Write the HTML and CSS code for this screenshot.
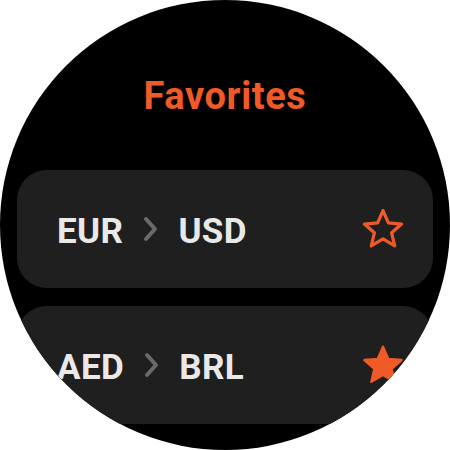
FILE: index.html
```html
<!DOCTYPE html>
<html>
<head>
<meta charset="utf-8">
<link rel="stylesheet" href="styles.css">
</head>
<body>
<div class="watch">
  <h1 class="title">Favorites</h1>
  <div class="list">
    <div class="card">
      <div class="pair">
        <span class="code">EUR</span>
        <svg class="chev" viewBox="0 0 16 26" width="16" height="26"><path d="M3 3 L12 13 L3 23" fill="none" stroke="#6a6a6a" stroke-width="4" stroke-linecap="round" stroke-linejoin="round"/></svg>
        <span class="code">USD</span>
      </div>
      <svg class="star" viewBox="0 0 24 24" width="46" height="46"><path d="M12 2.4 L14.8 8.8 L21.7 9.4 L16.5 14 L18.1 20.8 L12 17.2 L5.9 20.8 L7.5 14 L2.3 9.4 L9.2 8.8 Z" fill="none" stroke="#f05a28" stroke-width="1.7" stroke-linejoin="round"/></svg>
    </div>
    <div class="card">
      <div class="pair">
        <span class="code">AED</span>
        <svg class="chev" viewBox="0 0 16 26" width="16" height="26"><path d="M3 3 L12 13 L3 23" fill="none" stroke="#6a6a6a" stroke-width="4" stroke-linecap="round" stroke-linejoin="round"/></svg>
        <span class="code">BRL</span>
      </div>
      <svg class="star" viewBox="0 0 24 24" width="46" height="46"><path d="M12 2.4 L14.8 8.8 L21.7 9.4 L16.5 14 L18.1 20.8 L12 17.2 L5.9 20.8 L7.5 14 L2.3 9.4 L9.2 8.8 Z" fill="#f05a28" stroke="#f05a28" stroke-width="1.2" stroke-linejoin="round"/></svg>
    </div>
  </div>
</div>
</body>
</html>
```

FILE: styles.css
```css
html, body {
  margin: 0;
  padding: 0;
  background: #ffffff;
}
.watch {
  width: 450px;
  height: 450px;
  border-radius: 50%;
  background: #000000;
  overflow: hidden;
  font-family: Roboto, "Liberation Sans", sans-serif;
  display: flex;
  flex-direction: column;
  align-items: center;
}
.title {
  margin: 74px 0 0 0;
  height: 44px;
  line-height: 44px;
  font-size: 38px;
  font-weight: 700;
  letter-spacing: 0.6px;
  color: #f05a28;
}
.list {
  margin-top: 52px;
  width: 416px;
  display: flex;
  flex-direction: column;
  gap: 18px;
}
.card {
  height: 118px;
  border-radius: 30px;
  background: #1f1f1f;
  display: flex;
  align-items: center;
  justify-content: space-between;
  padding: 0 27px 0 40px;
}
.pair {
  display: flex;
  align-items: center;
}
.code {
  font-size: 35px;
  font-weight: 700;
  letter-spacing: 0.4px;
  color: #e9e9e9;
  line-height: 40px;
  padding-top: 6px;
}
.chev {
  margin: 0 19px 0 20px;
}
.star {
  display: block;
}
```
